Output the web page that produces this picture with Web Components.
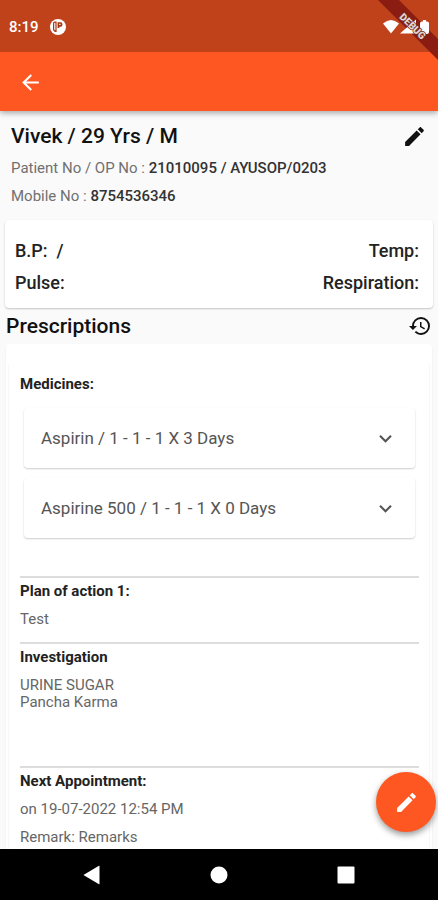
<!DOCTYPE html>
<html lang="en">
<head>
<meta charset="utf-8">
<meta name="viewport" content="width=device-width, initial-scale=1">
<title>Patient</title>
<style>
  html, body {
    height: 100%;
    margin: 0;
  }

  body {
    font-family: Roboto, "Liberation Sans", sans-serif;
    color: #111;
    background: #fafafa;
  }
</style>
</head>
<body>
<patient-screen>
  <status-bar slot="top" time="8:19"></status-bar>
  <app-bar slot="top"></app-bar>

  <patient-header name="Vivek / 29 Yrs / M">
    <info-line label="Patient No / OP No :">21010095 / AYUSOP/0203</info-line>
    <info-line label="Mobile No :">8754536346</info-line>
  </patient-header>

  <vitals-card>
    <span>B.P:&nbsp; /</span>
    <span>Temp:</span>
    <span>Pulse:</span>
    <span>Respiration:</span>
  </vitals-card>

  <prescription-list heading="Prescriptions">
    <note-section heading="Medicines:" plain>
      <medicine-tile>Aspirin / 1 - 1 - 1 X 3 Days</medicine-tile>
      <medicine-tile>Aspirine 500 / 1 - 1 - 1 X 0 Days</medicine-tile>
    </note-section>
    <note-section heading="Plan of action 1:">
      <div>Test</div>
    </note-section>
    <note-section heading="Investigation" roomy>
      <div>URINE SUGAR<br>Pancha Karma</div>
    </note-section>
    <note-section heading="Next Appointment:">
      <div>on 19-07-2022 12:54 PM</div>
      <div>Remark: Remarks</div>
    </note-section>
  </prescription-list>

  <edit-fab slot="fab"></edit-fab>
  <system-nav slot="bottom"></system-nav>
</patient-screen>

<script>
(function (window, undefined) {
  'use strict';

  const PENCIL = 'M3 17.25V21h3.75L17.81 9.94l-3.75-3.75L3 17.25zM20.71 7.04c.39-.39.39-1.02 0-1.41l-2.34-2.34c-.39-.39-1.02-.39-1.41 0l-1.83 1.83 3.75 3.75 1.83-1.83z';

  // Shared by every element that draws a bare icon button
  const buttonStyle = `
    button {
      display: flex;
      align-items: center;
      justify-content: center;
      padding: 0;
      border: none;
      background: none;
      color: inherit;
      font: inherit;
      cursor: pointer;
    }

    svg {
      display: block;
      fill: currentColor;
    }
  `;

  class BaseElement extends HTMLElement {
    constructor() {
      super();
      this.attachShadow({ mode: 'open' });
      this.shadowRoot.innerHTML = `<style>${this.style_()}</style>${this.html_()}`;
    }
  }

  class PatientScreen extends BaseElement {
    style_() {
      return `
        :host {
          display: flex;
          flex-direction: column;
          height: 100vh;
        }

        header {
          position: relative;
          z-index: 1;
          box-shadow: 0 2px 6px rgba(0, 0, 0, .35);
        }

        .body {
          position: relative;
          display: flex;
          flex: 1;
          min-height: 0;
        }

        main {
          flex: 1;
          min-width: 0;
          overflow-y: auto;
          scrollbar-width: none;
        }

        .fab {
          position: absolute;
          right: 2px;
          bottom: 17px;
        }
      `;
    }

    html_() {
      return `
        <header><slot name="top"></slot></header>
        <div class="body">
          <main><slot></slot></main>
          <div class="fab"><slot name="fab"></slot></div>
        </div>
        <slot name="bottom"></slot>
      `;
    }
  }

  class StatusBar extends BaseElement {
    style_() {
      return `
        :host {
          display: flex;
          align-items: center;
          justify-content: space-between;
          height: 52px;
          padding: 2px 8px 0 9px;
          box-sizing: border-box;
          color: #fff;
          background: #bf421a;
        }

        .left {
          display: flex;
          align-items: center;
          gap: 11px;
          font-size: 15px;
          font-weight: 500;
        }

        /* the system icons stay above the ribbon's band */
        .right {
          position: relative;
          z-index: 3;
        }

        svg {
          display: block;
        }
      `;
    }

    html_() {
      return `
        <div class="left">
          <span id="time"></span>
          <svg width="16" height="16" viewBox="0 0 16 16">
            <circle cx="8" cy="8" r="8" fill="#fff"/>
            <path d="M6 3.200H4.800Q3.600 3.200 3.600 4.600v5.600q0 1.800 2.400 2.200z" fill="none" stroke="#a8330f" stroke-width="1.200"/>
            <path d="M7.600 3.300h3q1.900 0 1.900 2.200t-1.900 2.200h-1.200v1.400H7.600z" fill="#a8330f"/>
            <path d="M9.200 4.800h1.400v1.300H9.200z" fill="#fff"/>
          </svg>
        </div>
        <div class="right">
          <svg width="47" height="16" viewBox="0 0 47 16" fill="#fff">
            <path d="M0 4.500Q8 -2.500 16 4.500L8 14.500z"/>
            <path d="M17 14.500L33 .5v14z"/>
            <path d="M40 1h3v1.500h1q2 0 2 2V13q0 2-2 2h-5q-2 0-2-2V4.500q0-2 2-2h1z"/>
          </svg>
        </div>
      `;
    }

    connectedCallback() {
      this.shadowRoot.getElementById('time').innerText = this.getAttribute('time');
    }
  }

  // Diagonal corner banner, it lies over the status bar and the app bar
  class DebugRibbon extends BaseElement {
    style_() {
      return `
        :host {
          display: block;
          pointer-events: none;
        }

        svg {
          position: absolute;
          top: 0;
          right: 0;
          z-index: 2;
          font-size: 10px;
          font-weight: 900;
        }

        .label {
          z-index: 4;
        }
      `;
    }

    html_() {
      return `
        <svg width="62" height="62" viewBox="0 0 62 62">
          <path d="M2 0h21l39 39v21z" fill="#8b1c12"/>
        </svg>
        <svg class="label" width="62" height="62" viewBox="0 0 62 62">
          <text x="37" y="30" text-anchor="middle" fill="#e6d5d2" stroke="#6f3028" stroke-width="1.500" paint-order="stroke" transform="rotate(45 37 26)">DEBUG</text>
        </svg>
      `;
    }
  }

  class AppBar extends BaseElement {
    style_() {
      return `
        ${buttonStyle}

        :host {
          display: flex;
          align-items: center;
          height: 59px;
          padding: 2px 18px 0;
          box-sizing: border-box;
          color: #fff;
          background: #ff5722;
        }
      `;
    }

    html_() {
      return `
        <button type="button" aria-label="Back">
          <svg width="25" height="25" viewBox="0 0 24 24"><path d="M20 11H7.830l5.590-5.590L12 4l-8 8 8 8 1.410-1.410L7.830 13H20v-2z"/></svg>
        </button>
        <debug-ribbon></debug-ribbon>
      `;
    }
  }

  class PatientHeader extends BaseElement {
    style_() {
      return `
        ${buttonStyle}

        :host {
          display: block;
          padding: 11px 11px 10px;
        }

        .title {
          display: flex;
          align-items: center;
          justify-content: space-between;
          margin-bottom: 4px;
        }

        h1 {
          margin: 0;
          font-size: 21px;
          font-weight: 500;
          line-height: 28px;
        }
      `;
    }

    html_() {
      return `
        <div class="title">
          <h1></h1>
          <button type="button" aria-label="Edit patient">
            <svg width="25" height="25" viewBox="0 0 24 24"><path d="${PENCIL}"/></svg>
          </button>
        </div>
        <slot></slot>
      `;
    }

    connectedCallback() {
      this.shadowRoot.querySelector('h1').innerText = this.getAttribute('name');
    }
  }

  class InfoLine extends BaseElement {
    style_() {
      return `
        :host {
          display: block;
          font-size: 15px;
          line-height: 28px;
          color: #333;
        }

        span {
          color: #707070;
        }

        b {
          font-weight: 500;
        }
      `;
    }

    html_() {
      return `<span></span> <b><slot></slot></b>`;
    }

    connectedCallback() {
      this.shadowRoot.querySelector('span').innerText = this.getAttribute('label');
    }
  }

  class VitalsCard extends BaseElement {
    style_() {
      return `
        :host {
          display: grid;
          grid-template-columns: auto auto;
          justify-content: space-between;
          margin: 0 5px;
          padding: 15px 14px 9px 10px;
          border-radius: 4px;
          font-size: 18px;
          font-weight: 500;
          line-height: 32px;
          color: #222;
          background: #fff;
          box-shadow: 0 1px 2px rgba(0, 0, 0, .22);
        }

        ::slotted(:nth-child(even)) {
          text-align: right;
        }
      `;
    }

    html_() {
      return `<slot></slot>`;
    }
  }

  class PrescriptionList extends BaseElement {
    style_() {
      return `
        ${buttonStyle}

        :host {
          display: block;
          margin: 0 6px;
        }

        .title {
          display: flex;
          align-items: center;
          justify-content: space-between;
          height: 36px;
        }

        h2 {
          margin: 0;
          font-size: 21px;
          font-weight: 500;
          line-height: 28px;
        }

        .outer {
          padding: 18px 3px;
          border-radius: 4px;
          background: #fff;
          box-shadow: 0 1px 2px rgba(0, 0, 0, .08);
        }

        .inner {
          padding: 0 10px 12px 11px;
          border-radius: 4px;
          box-shadow: 0 1px 2px rgba(0, 0, 0, .12);
        }
      `;
    }

    html_() {
      return `
        <div class="title">
          <h2></h2>
          <button type="button" aria-label="History">
            <svg width="24" height="24" viewBox="0 0 24 24"><path d="M13 3a9 9 0 0 0-9 9H1l3.890 3.890.07.14L9 12H6c0-3.870 3.130-7 7-7s7 3.130 7 7-3.130 7-7 7c-1.930 0-3.680-.790-4.940-2.060l-1.420 1.420A8.950 8.950 0 0 0 13 21a9 9 0 0 0 0-18zm-1 5v5l4.280 2.540.720-1.210-3.500-2.080V8H12z"/></svg>
          </button>
        </div>
        <div class="outer"><div class="inner"><slot></slot></div></div>
      `;
    }

    connectedCallback() {
      this.shadowRoot.querySelector('h2').innerText = this.getAttribute('heading');
    }
  }

  class NoteSection extends BaseElement {
    style_() {
      return `
        :host {
          display: block;
          padding-bottom: 3px;
          border-top: 2px solid #ddd;
          font-size: 15px;
          line-height: 17px;
          color: #666;
        }

        :host([plain]) {
          padding: 9px 0 38px;
          border-top: none;
        }

        :host([roomy]) {
          padding-bottom: 44px;
        }

        h3 {
          margin: 0;
          padding: 4px 0 5px;
          font-size: 15px;
          font-weight: 700;
          line-height: 18px;
          color: #222;
        }

        ::slotted(div) {
          margin: 6px 0 11px;
        }
      `;
    }

    html_() {
      return `<h3></h3><slot></slot>`;
    }

    connectedCallback() {
      this.shadowRoot.querySelector('h3').innerText = this.getAttribute('heading');
    }
  }

  class MedicineTile extends BaseElement {
    style_() {
      return `
        ${buttonStyle}

        :host {
          display: block;
          margin: 10px 4px 0;
          color: #555;
          font-size: 17px;
        }

        button {
          justify-content: space-between;
          width: 100%;
          height: 60px;
          padding: 0 17px;
          border-radius: 4px;
          text-align: left;
          background: #fff;
          box-shadow: 0 1px 2px rgba(0, 0, 0, .2);
        }
      `;
    }

    html_() {
      return `
        <button type="button" aria-expanded="false">
          <slot></slot>
          <svg width="25" height="25" viewBox="0 0 24 24"><path d="M16.590 8.590L12 13.170 7.410 8.590 6 10l6 6 6-6z"/></svg>
        </button>
      `;
    }
  }

  class EditFab extends BaseElement {
    style_() {
      return `
        ${buttonStyle}

        :host {
          display: block;
        }

        button {
          width: 60px;
          height: 60px;
          border-radius: 50%;
          color: #fff;
          background: #ff5722;
          box-shadow: 0 3px 6px rgba(0, 0, 0, .4);
        }
      `;
    }

    html_() {
      return `
        <button type="button" aria-label="Edit prescription">
          <svg width="25" height="25" viewBox="0 0 24 24"><path d="${PENCIL}"/></svg>
        </button>
      `;
    }
  }

  class SystemNav extends BaseElement {
    style_() {
      return `
        ${buttonStyle}

        :host {
          display: flex;
          align-items: center;
          justify-content: space-around;
          height: 51px;
          padding: 0 29px;
          color: #fff;
          background: #000;
        }

        button {
          width: 24px;
          height: 24px;
        }
      `;
    }

    html_() {
      return `
        <button type="button" aria-label="Back">
          <svg width="18" height="20" viewBox="0 0 18 20"><path d="M16.500 1v18q0 .5-.5.2L.8 10.300q-.5-.300 0-.600L16 .8q.5-.300.5.2z"/></svg>
        </button>
        <button type="button" aria-label="Home">
          <svg width="18" height="18" viewBox="0 0 18 18"><circle cx="9" cy="9" r="8.500"/></svg>
        </button>
        <button type="button" aria-label="Recent apps">
          <svg width="18" height="18" viewBox="0 0 18 18"><rect x=".5" y=".5" width="17" height="17" rx="1"/></svg>
        </button>
      `;
    }
  }

  window.customElements.define('patient-screen', PatientScreen);
  window.customElements.define('status-bar', StatusBar);
  window.customElements.define('debug-ribbon', DebugRibbon);
  window.customElements.define('app-bar', AppBar);
  window.customElements.define('patient-header', PatientHeader);
  window.customElements.define('info-line', InfoLine);
  window.customElements.define('vitals-card', VitalsCard);
  window.customElements.define('prescription-list', PrescriptionList);
  window.customElements.define('note-section', NoteSection);
  window.customElements.define('medicine-tile', MedicineTile);
  window.customElements.define('edit-fab', EditFab);
  window.customElements.define('system-nav', SystemNav);

})(window, void 0);
</script>
</body>
</html>
